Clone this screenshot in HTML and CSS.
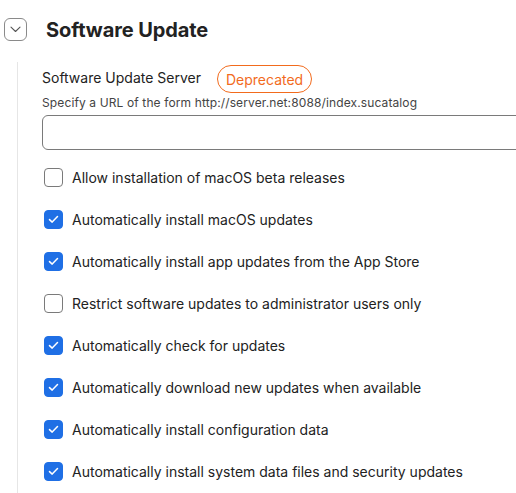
FILE: index.html
```html
<!DOCTYPE html>
<html>
<head>
<meta charset="utf-8">
<link rel="stylesheet" href="styles.css">
</head>
<body>
<div class="page">
  <div class="header">
    <button class="toggle" aria-label="Collapse">
      <svg width="11" height="7" viewBox="0 0 11 7"><path d="M1 1.2 L5.5 5.5 L10 1.2" fill="none" stroke="#555" stroke-width="1.1" stroke-linecap="round" stroke-linejoin="round"/></svg>
    </button>
    <h1 class="title">Software Update</h1>
  </div>
  <div class="section">
    <div class="field-head">
      <span class="label">Software Update Server</span>
      <span class="badge">Deprecated</span>
    </div>
    <div class="hint">Specify a URL of the form http://server.net:8088/index.sucatalog</div>
    <div class="input"></div>
    <ul class="checks">
      <li><span class="box"></span>Allow installation of macOS beta releases</li>
      <li><span class="box on"><svg width="11" height="9" viewBox="0 0 11 9"><path d="M1.5 4.6 L4.2 7.1 L9.5 1.6" fill="none" stroke="#fff" stroke-width="1.5" stroke-linecap="round" stroke-linejoin="round"/></svg></span>Automatically install macOS updates</li>
      <li><span class="box on"><svg width="11" height="9" viewBox="0 0 11 9"><path d="M1.5 4.6 L4.2 7.1 L9.5 1.6" fill="none" stroke="#fff" stroke-width="1.5" stroke-linecap="round" stroke-linejoin="round"/></svg></span>Automatically install app updates from the App Store</li>
      <li><span class="box"></span>Restrict software updates to administrator users only</li>
      <li><span class="box on"><svg width="11" height="9" viewBox="0 0 11 9"><path d="M1.5 4.6 L4.2 7.1 L9.5 1.6" fill="none" stroke="#fff" stroke-width="1.5" stroke-linecap="round" stroke-linejoin="round"/></svg></span>Automatically check for updates</li>
      <li><span class="box on"><svg width="11" height="9" viewBox="0 0 11 9"><path d="M1.5 4.6 L4.2 7.1 L9.5 1.6" fill="none" stroke="#fff" stroke-width="1.5" stroke-linecap="round" stroke-linejoin="round"/></svg></span>Automatically download new updates when available</li>
      <li><span class="box on"><svg width="11" height="9" viewBox="0 0 11 9"><path d="M1.5 4.6 L4.2 7.1 L9.5 1.6" fill="none" stroke="#fff" stroke-width="1.5" stroke-linecap="round" stroke-linejoin="round"/></svg></span>Automatically install configuration data</li>
      <li><span class="box on"><svg width="11" height="9" viewBox="0 0 11 9"><path d="M1.5 4.6 L4.2 7.1 L9.5 1.6" fill="none" stroke="#fff" stroke-width="1.5" stroke-linecap="round" stroke-linejoin="round"/></svg></span>Automatically install system data files and security updates</li>
    </ul>
  </div>
</div>
</body>
</html>
```
FILE: styles.css
```css
html, body {
  margin: 0;
  padding: 0;
  background: #fff;
}
body {
  font-family: Inter, "Noto Sans", sans-serif;
  color: #222;
  overflow: hidden;
  width: 516px;
  height: 493px;
}
.page {
  padding-top: 18px;
}
.header {
  display: flex;
  align-items: center;
  height: 23px;
  padding-left: 4px;
}
.toggle {
  width: 23px;
  height: 23px;
  box-sizing: border-box;
  border: 1px solid #8a8a8a;
  border-radius: 6px;
  background: #fff;
  padding: 0;
  display: flex;
  align-items: center;
  justify-content: center;
}
.title {
  margin: 0 0 0 19px;
  font-size: 20px;
  font-weight: 700;
  color: #222;
  letter-spacing: -0.1px;
}
.section {
  margin-top: 21px;
  margin-left: 17px;
  border-left: 1px solid #e6e6e6;
  padding-left: 24px;
  padding-top: 3px;
  padding-bottom: 40px;
}
.field-head {
  display: flex;
  align-items: center;
  height: 28px;
}
.label {
  font-size: 14px;
  color: #222;
  position: relative;
  top: -2px;
}
.badge {
  margin-left: 16px;
  height: 28px;
  box-sizing: border-box;
  border: 1px solid #f26b1d;
  border-radius: 14px;
  color: #f26b1d;
  font-size: 14px;
  padding: 0 8px;
  display: flex;
  align-items: center;
}
.hint {
  font-size: 12px;
  color: #444;
  margin-top: 2px;
  line-height: 15px;
  letter-spacing: 0.12px;
}
.input {
  margin-top: 5px;
  height: 35px;
  width: 500px;
  box-sizing: border-box;
  border: 1px solid #7a7a7a;
  border-radius: 6px;
}
.checks {
  list-style: none;
  margin: 6px 0 0 0;
  padding: 0;
}
.checks li {
  display: flex;
  align-items: center;
  height: 42px;
  font-size: 14px;
  color: #222;
}
.box {
  width: 19px;
  height: 19px;
  box-sizing: border-box;
  border: 1px solid #7a7a7a;
  border-radius: 4px;
  margin-left: 2px;
  margin-right: 9px;
  display: flex;
  align-items: center;
  justify-content: center;
  flex: none;
}
.box.on {
  background: #1f6fe5;
  border-color: #1f6fe5;
}
```
